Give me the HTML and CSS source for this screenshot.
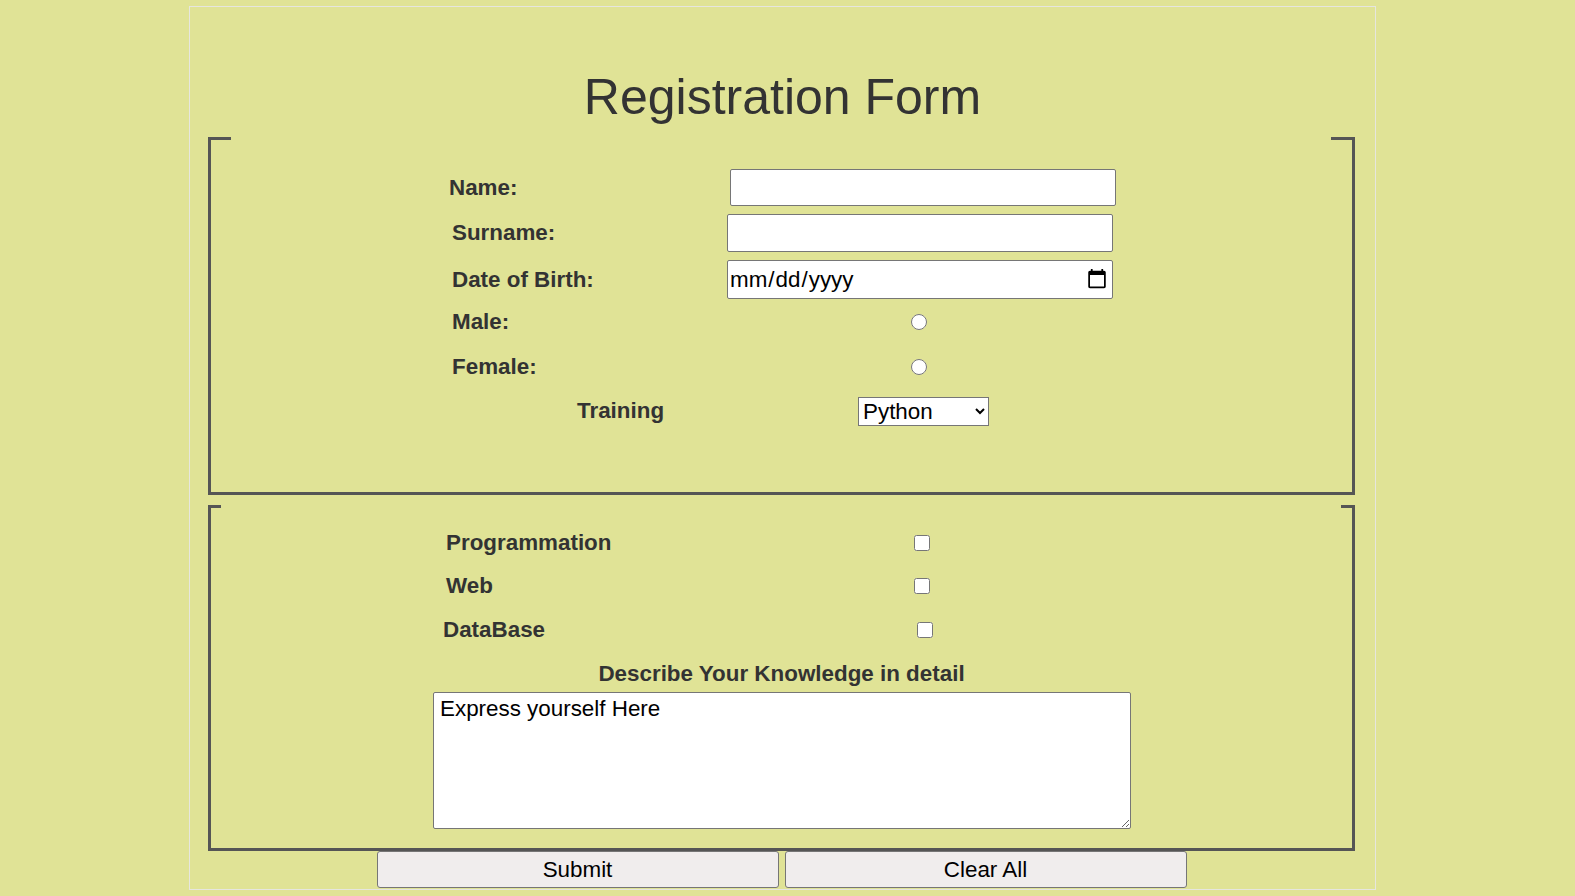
FILE: index.html
```html
<!DOCTYPE html>
<html lang="en">
<head>
<meta charset="utf-8">
<title>Registration Form</title>
<link rel="stylesheet" href="styles.css">
</head>
<body>
<form class="card">
  <h1 class="title">Registration Form</h1>
  <fieldset class="box box-personal">
    <legend class="gap gap-wide"></legend>
    <div class="row row-name">
      <label class="lbl lbl-name" for="name">Name:</label>
      <input class="field field-name" id="name" type="text">
    </div>
    <div class="row row-surname">
      <label class="lbl lbl-std" for="surname">Surname:</label>
      <input class="field field-surname" id="surname" type="text">
    </div>
    <div class="row row-dob">
      <label class="lbl lbl-std" for="dob">Date of Birth:</label>
      <input class="field field-dob" id="dob" type="date">
    </div>
    <div class="row row-radio">
      <label class="lbl lbl-radio" for="male">Male:</label>
      <input class="tick" id="male" type="radio" name="gender">
    </div>
    <div class="row row-radio">
      <label class="lbl lbl-radio" for="female">Female:</label>
      <input class="tick" id="female" type="radio" name="gender">
    </div>
    <div class="row row-training">
      <label class="lbl lbl-training" for="training">Training</label>
      <select class="picker" id="training">
        <option>Python</option>
        <option>Java</option>
        <option>C++</option>
      </select>
    </div>
  </fieldset>
  <fieldset class="box box-skills">
    <legend class="gap gap-wider"></legend>
    <div class="row row-check row-first">
      <label class="lbl lbl-check" for="prog">Programmation</label>
      <input class="tick" id="prog" type="checkbox">
    </div>
    <div class="row row-check row-web">
      <label class="lbl lbl-check" for="web">Web</label>
      <input class="tick" id="web" type="checkbox">
    </div>
    <div class="row row-check row-db">
      <label class="lbl lbl-db" for="db">DataBase</label>
      <input class="tick" id="db" type="checkbox">
    </div>
    <div class="describe">Describe Your Knowledge in detail</div>
    <textarea class="notes">Express yourself Here</textarea>
  </fieldset>
  <div class="actions">
    <button class="btn" type="submit">Submit</button>
    <button class="btn" type="reset">Clear All</button>
  </div>
</form>
</body>
</html>
```
FILE: styles.css
```css
html, body {
  margin: 0;
  padding: 0;
}
body {
  background: #e0e396;
  font-family: "Liberation Sans", Arial, sans-serif;
  color: #333;
  height: 896px;
  overflow: hidden;
}
.card {
  box-sizing: border-box;
  width: 1187px;
  margin: 6px 0 0 189px;
  border: 1px solid #e6e6df;
  padding: 0 0 1px 0;
}
.title {
  margin: 61px 0 11px 0;
  font-size: 50px;
  line-height: 58px;
  font-weight: normal;
  text-align: center;
  color: #333;
}
.box {
  margin: 0 20px 0 18px;
  padding: 0;
  min-width: 0;
  border: 3px solid #555;
}
.box-skills {
  margin-top: 10px;
  padding-bottom: 19px;
}
.box-personal {
  padding-bottom: 59px;
}
.gap {
  padding: 0;
  height: 3px;
  box-sizing: border-box;
}
.gap-wide {
  width: 1100px;
  margin-left: 20px;
}
.gap-wider {
  width: 1120px;
  margin-left: 10px;
}
.row {
  display: flex;
  align-items: center;
}
.lbl {
  flex: none;
  font-weight: bold;
  font-size: 22.4px;
  color: #333;
}
.row-name {
  margin-top: 29px;
  padding-left: 238px;
  height: 37px;
}
.lbl-name { width: 281px; }
.row-surname {
  margin-top: 8px;
  padding-left: 241px;
  height: 38px;
}
.row-dob {
  margin-top: 8px;
  padding-left: 241px;
  height: 39px;
}
.lbl-std { width: 275px; }
.row-radio {
  padding-left: 241px;
  height: 44px;
  margin-top: 1px;
}
.lbl-radio { width: 459px; }
.row-training {
  padding-left: 366px;
  height: 44px;
}
.lbl-training { width: 281px; }
.field {
  box-sizing: border-box;
  width: 386px;
  margin: 0;
  padding: 1px 2px;
  border: 1px solid #767676;
  border-radius: 2px;
  background: #fff;
  font-family: "Liberation Sans", Arial, sans-serif;
  font-size: 22.4px;
  color: #000;
}
.field-name { height: 37px; }
.field-surname { height: 38px; }
.field-dob { height: 39px; padding: 1px 2px 1px 1px; }
.tick {
  flex: none;
  margin: 0;
  width: 16px;
  height: 16px;
}
.picker {
  box-sizing: border-box;
  width: 131px;
  height: 29px;
  margin: 0;
  font-family: "Liberation Sans", Arial, sans-serif;
  font-size: 22.4px;
  color: #000;
  background: #fff;
  border: 1px solid #767676;
  border-radius: 0;
}
.row-check {
  padding-left: 235px;
}
.lbl-check { width: 468px; }
.row-first {
  margin-top: 14px;
  height: 42px;
}
.row-web { height: 44px; }
.row-db {
  padding-left: 232px;
  height: 44px;
}
.lbl-db { width: 474px; }
.describe {
  margin-top: 4px;
  height: 36px;
  display: flex;
  align-items: center;
  justify-content: center;
  font-weight: bold;
  font-size: 22.4px;
  color: #333;
}
.notes {
  display: block;
  box-sizing: border-box;
  width: 698px;
  height: 137px;
  margin: 0 0 0 222px;
  padding: 3px 6px;
  border: 1px solid #767676;
  border-radius: 2px;
  background: #fff;
  font-family: "Liberation Sans", Arial, sans-serif;
  font-size: 22.4px;
  color: #000;
}
.actions {
  display: flex;
  justify-content: center;
  gap: 6px;
  padding-right: 2px;
}
.btn {
  box-sizing: border-box;
  width: 402px;
  height: 37px;
  margin: 0;
  padding: 0;
  border: 1px solid #767676;
  border-radius: 3px;
  background: #f0eded;
  font-family: "Liberation Sans", Arial, sans-serif;
  font-size: 22.4px;
  color: #000;
}
```
